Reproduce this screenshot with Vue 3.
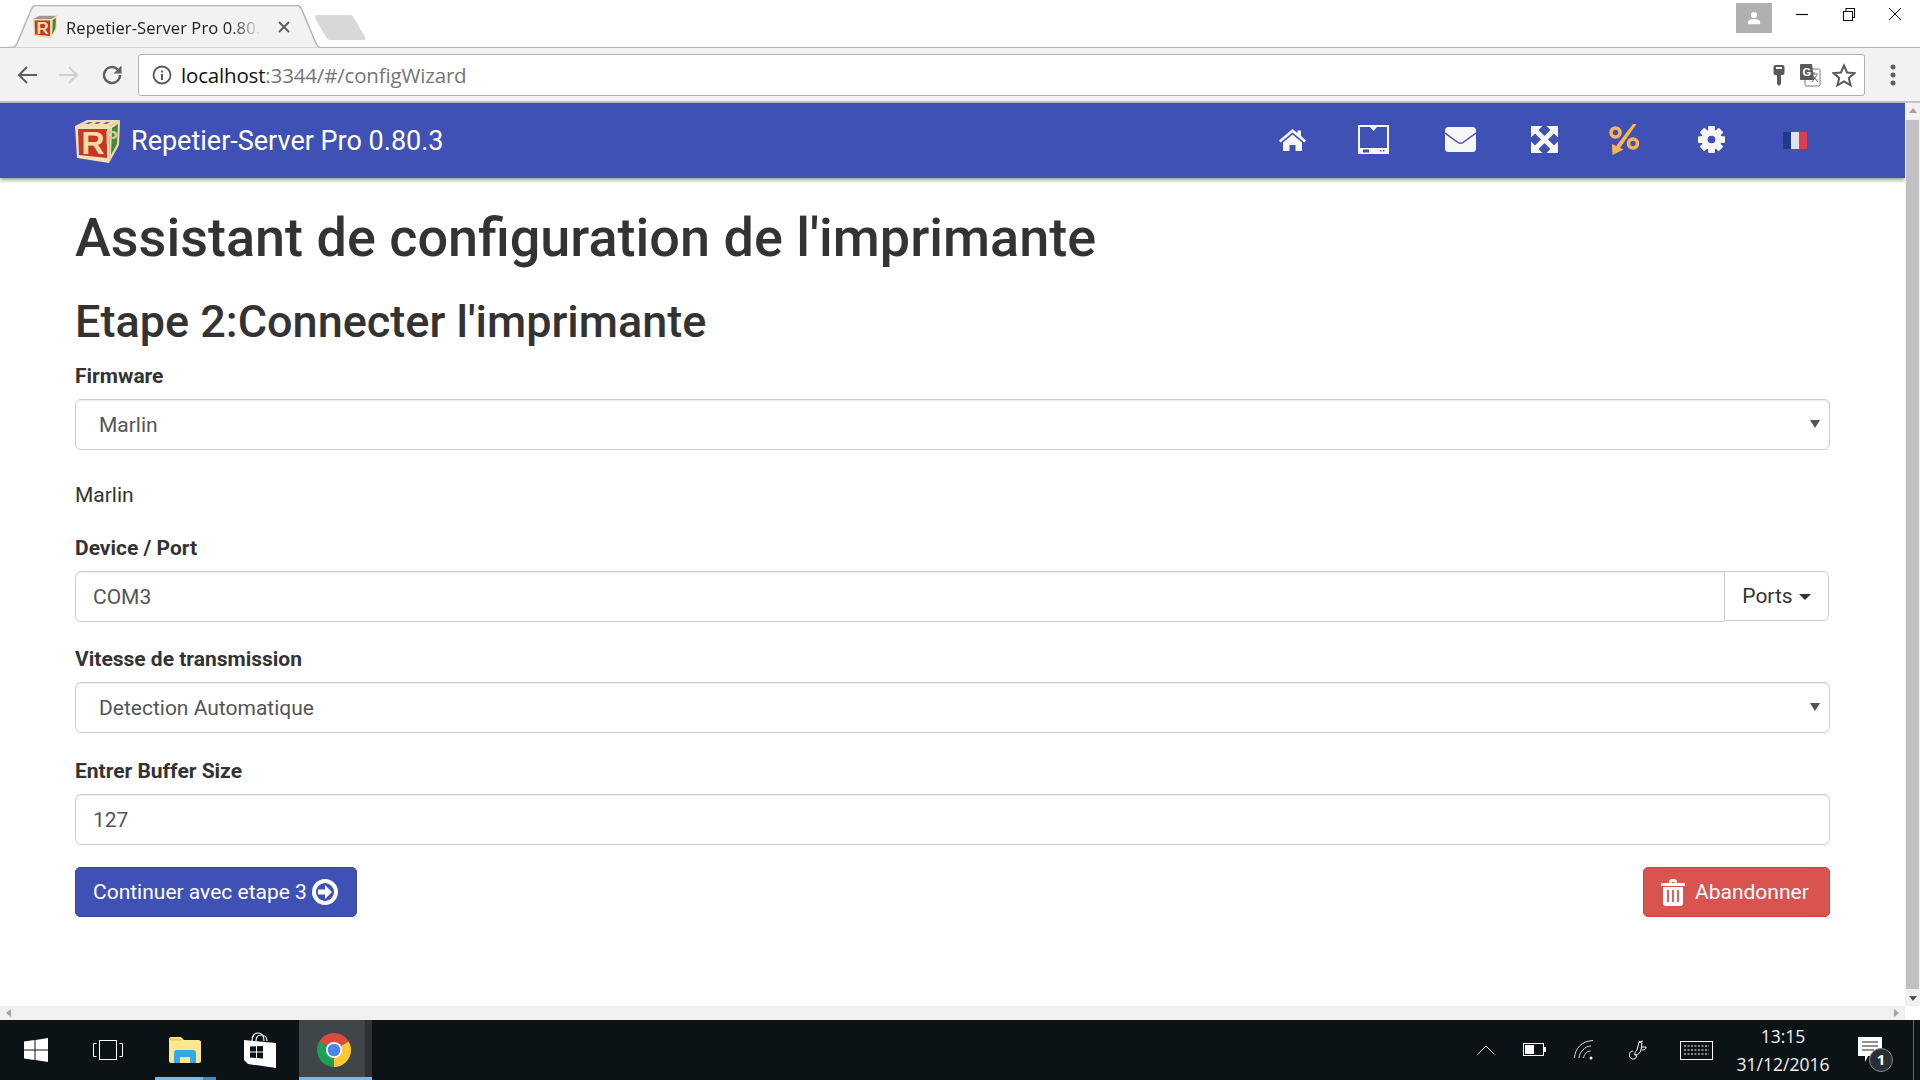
<script setup>
const teeth = [0, 45, 90, 135]
</script>

<template>
  <div class="window">
    <div class="tabstrip">
      <div class="tab">
        <svg class="tab-shape" viewBox="0 0 312 43" width="312" height="43"><path d="M0 42.500h4c3 0 4-2 5-4L23 5c1-3 3-4.500 6-4.500h259c3 0 5 1.500 6 4.500l14 33.500c1 2 2 4 5 4" fill="#f2f2f2" stroke="#b4b4b4" stroke-width="1.500"/></svg>
        <svg class="favicon" viewBox="0 0 45 44" width="24" height="24">
          <path d="M0 7L12 1h33L35 7z" fill="#9b9a92"/>
          <path d="M35 7L45 1l-1 25-10 18z" fill="#f0dcae"/>
          <path d="M37 9l6-4-1 20-6 11z" fill="#3f8a3c"/>
          <path d="M0 7h35l-1 37L2 39z" fill="#f0dcae"/>
          <path d="M3 10h29l0 29-28-3z" fill="#c5352a"/>
          <text x="18" y="35" class="cube-r">R</text>
        </svg>
        <span class="tab-title">Repetier-Server Pro 0.80.</span>
        <svg class="tab-close" viewBox="0 0 12 12" width="12" height="12"><path d="M1 1l10 10M11 1L1 11" stroke="#5a5a5a" stroke-width="1.800"/></svg>
      </div>
      <svg class="newtab" viewBox="0 0 52 26" width="52" height="26"><path d="M3 1h33c2 0 3 1 4 3l11 19c1 2 0 3-2 3H16c-2 0-3-1-4-3L1 4c-1-2 0-3 2-3z" fill="#d8d8d8"/></svg>
      <div class="spacer"></div>
      <div class="user"><svg viewBox="0 0 16 16" width="14" height="14"><circle cx="8" cy="4.500" r="3.500" fill="#fff"/><path d="M1 15v-2c0-3 4-4 7-4s7 1 7 4v2z" fill="#fff"/></svg></div>
      <div class="winbtns">
        <svg viewBox="0 0 14 14" width="14" height="14"><path d="M1 7.500h12" stroke="#111" stroke-width="1.200"/></svg>
        <svg viewBox="0 0 14 14" width="14" height="14"><path d="M1.500 4.500h9v9h-9zM4 4.500v-3h8.500v9h-2" fill="none" stroke="#111" stroke-width="1.100"/></svg>
        <svg viewBox="0 0 14 14" width="14" height="14"><path d="M1 1l12 12M13 1L1 13" stroke="#111" stroke-width="1"/></svg>
      </div>
    </div>

    <div class="toolbar">
      <svg class="tb-icon" viewBox="0 0 20 20" width="20" height="20"><path d="M20 10H2M10 2l-8 8 8 8" fill="none" stroke="#5f5f5f" stroke-width="2"/></svg>
      <svg class="tb-icon" viewBox="0 0 20 20" width="20" height="20"><path d="M0 10h18M10 2l8 8-8 8" fill="none" stroke="#d0d0d0" stroke-width="2"/></svg>
      <svg class="tb-icon" viewBox="0 0 22 22" width="22" height="22"><path d="M19 11a8 8 0 1 1-2.400-5.700" fill="none" stroke="#5f5f5f" stroke-width="2.400"/><path d="M20.500 1.500v8h-8z" fill="#5f5f5f"/></svg>
      <div class="omnibox">
        <svg viewBox="0 0 20 20" width="20" height="20"><circle cx="10" cy="10" r="8.500" fill="none" stroke="#5a5a5a" stroke-width="1.800"/><rect x="9" y="9" width="2" height="6" fill="#5a5a5a"/><rect x="9" y="5.500" width="2" height="2" fill="#5a5a5a"/></svg>
        <span class="url"><b>localhost</b>:3344/#/configWizard</span>
        <div class="spacer"></div>
        <svg class="key" viewBox="0 0 12 24" width="12" height="24"><rect x="0.500" y="2" width="11" height="10" rx="2" fill="#5a5a5a"/><rect x="3" y="4" width="6" height="2" fill="#fff"/><path d="M4 12h4v9l-2 2-2-2z" fill="#5a5a5a"/></svg>
        <svg viewBox="0 0 22 24" width="22" height="24"><rect x="6" y="6" width="15" height="17" rx="1.500" fill="#fff" stroke="#777"/><path d="M2 1h11l2 16H2a1 1 0 0 1-1-1V2a1 1 0 0 1 1-1z" fill="#5a5a5a"/><text x="3.500" y="13" class="gt">G</text><path d="M12 11h7M15 9v2M18 12l-5 7M14 13l5 6" stroke="#666" fill="none"/></svg>
        <svg viewBox="0 0 24 24" width="24" height="24"><path d="M12 2.500l3 7 7.500.6-5.700 4.900 1.800 7.300L12 18.400l-6.600 3.900 1.800-7.300L1.500 10.100 9 9.500z" fill="none" stroke="#5a5a5a" stroke-width="2"/></svg>
      </div>
      <svg class="kebab" viewBox="0 0 6 24" width="6" height="24"><circle cx="3" cy="4" r="2.500" fill="#5f5f5f"/><circle cx="3" cy="12" r="2.500" fill="#5f5f5f"/><circle cx="3" cy="20" r="2.500" fill="#5f5f5f"/></svg>
    </div>

    <div class="viewport">
      <div class="page">
        <div class="main">
          <nav class="navbar">
            <svg class="logo" viewBox="0 0 45 44" width="45" height="44">
              <path d="M0 7L12 1h33L35 7z" fill="#f0dcae"/>
              <path d="M10 5l4-2h4l-4 2zM19 5l3-2h4l-3 2zM28 5l3-2h4l-3 2z" fill="#5c6bb0"/>
              <path d="M35 7L45 1l-1 25-10 18z" fill="#f0dcae"/>
              <path d="M37 9l6-4-1 20-6 11z" fill="#3f8a3c"/>
              <path d="M0 7h35l-1 37L2 39z" fill="#f3e0b2"/>
              <path d="M3 10h29l0 29-28-3z" fill="#c5352a"/>
              <text x="18" y="35" class="cube-r">R</text>
              <text x="36.500" y="25" class="cube-p">P</text>
            </svg>
            <span class="brand">Repetier-Server Pro 0.80.3</span>
            <div class="spacer"></div>
            <a class="nav-item n-home">
              <svg viewBox="0 0 27 22" width="27" height="22"><path d="M13.500 0L0 11.500l1.500 2L13.500 3.500l12 10 1.500-2L22 7V1.500h-3.500v2.500z" fill="#f7f7f7"/><path d="M13.500 5.500L4 13.500V22h6.500v-6h6v6H23v-8.500z" fill="#f7f7f7"/></svg>
            </a>
            <a class="nav-item n-printer">
              <svg viewBox="0 0 31 29" width="31" height="29"><path d="M0 0h31v29H0z" fill="#f7f7f7"/><path d="M2 2h10l3.500 4L19 2h10v21H2z" fill="#3f51b5"/><rect x="5" y="24.500" width="6" height="3" fill="#3f51b5"/><rect x="22" y="25" width="1.500" height="1.500" fill="#3f51b5"/><rect x="25" y="25" width="1.500" height="1.500" fill="#3f51b5"/></svg>
            </a>
            <a class="nav-item n-mail">
              <svg viewBox="0 0 31 25" width="31" height="25"><rect width="31" height="25" rx="3.500" fill="#f7f7f7"/><path d="M0 6l13 9.500c1.500 1 3.500 1 5 0L31 6" fill="none" stroke="#3f51b5" stroke-width="1.500"/></svg>
            </a>
            <a class="nav-item n-expand">
              <svg viewBox="0 0 27 27" width="27" height="27"><path d="M0 0h11.500L0 11.500zM27 0v11.500L15.500 0zM0 27V15.500L11.500 27zM27 27H15.500L27 15.500z" fill="#f7f7f7"/><path d="M4 4l19 19M23 4L4 23" stroke="#f7f7f7" stroke-width="5"/></svg>
            </a>
            <a class="nav-item n-pct">
              <svg viewBox="0 0 31 31" width="31" height="31"><circle cx="6.500" cy="8.500" r="4.500" fill="none" stroke="#fbb64f" stroke-width="3.500"/><circle cx="24" cy="19.500" r="4.500" fill="none" stroke="#fbb64f" stroke-width="3.500"/><path d="M24 0h3.500L10 25.500l-3.500-2.500z" fill="#fbb64f"/><path d="M3.500 31l-.5-11 11.500 5.500z" fill="#fbb64f"/></svg>
            </a>
            <a class="nav-item n-gear">
              <svg viewBox="0 0 28 28" width="27" height="27">
                <rect v-for="a in teeth" :key="a" x="10.500" y="0" width="7" height="28" rx="1" fill="#f7f7f7" :transform="`rotate(${a} 14 14)`"/>
                <circle cx="14" cy="14" r="10.500" fill="#f7f7f7"/>
                <circle cx="14" cy="14" r="4" fill="#3f51b5"/>
              </svg>
            </a>
            <a class="nav-item flag">
              <i class="fl-b"></i><i class="fl-w"></i><i class="fl-r"></i>
            </a>
          </nav>

          <div class="content">
            <h1>Assistant de configuration de l'imprimante</h1>
            <h2>Etape 2:Connecter l'imprimante</h2>

            <label>Firmware</label>
            <div class="sel"><select><option>Marlin</option></select></div>
            <p class="firm">Marlin</p>

            <label>Device / Port</label>
            <div class="input-group">
              <input value="COM3" />
              <button class="ports">Ports <i class="caret"></i></button>
            </div>

            <label>Vitesse de transmission</label>
            <div class="sel"><select><option>Detection Automatique</option></select></div>

            <label>Entrer Buffer Size</label>
            <input class="solo" value="127" />

            <div class="actions">
              <button class="btn primary">Continuer avec etape 3
                <svg viewBox="0 0 26 26" width="26" height="26"><circle cx="13" cy="13" r="13" fill="#fff"/><circle cx="13" cy="13" r="9" fill="#3f51b5"/><path d="M13 6l7 7-7 7v-4.500H6v-5h7z" fill="#fff"/></svg>
              </button>
              <button class="btn danger">
                <svg viewBox="0 0 24 27" width="24" height="27"><path d="M8 4V3c0-1.500 1-3 3-3h2c2 0 3 1.500 3 3v1h7c.6 0 1 .4 1 1v2H0V5c0-.6.4-1 1-1zm2.500 0h3v-1h-3z" fill="#fff" fill-rule="evenodd"/><path d="M2 8h20v16c0 1.700-1 3-3 3H5c-2 0-3-1.300-3-3z" fill="#fff"/><path d="M7 11v12M12 11v12M17 11v12" stroke="#d9534f" stroke-width="1.800"/></svg>
                Abandonner
              </button>
            </div>
          </div>
        </div>
        <div class="vscroll">
          <i class="tri-up"></i>
          <div class="thumb"></div>
          <i class="tri-down"></i>
        </div>
      </div>
      <div class="hscroll"><i class="tri-left"></i><i class="tri-right"></i></div>
    </div>

    <footer class="taskbar">
      <svg class="t-win" viewBox="0 0 24 24" width="24" height="24"><path d="M0 3.500l10.500-1.500v9.500H0zM11.500 1.900L24 0v11.500H11.500zM0 12.500h10.500V22L0 20.500zM11.500 12.500H24V24l-12.500-1.900z" fill="#fff"/></svg>
      <svg class="t-view" viewBox="0 0 30 20" width="30" height="20"><path d="M3.500 3.500H.5v13h3M26.500 3.500h3v13h-3" fill="none" stroke="#fff"/><rect x="6.500" y=".5" width="17" height="19" fill="none" stroke="#fff"/></svg>
      <div class="t-app t-explorer">
        <svg viewBox="0 0 32 26" width="32" height="26"><path d="M0 2c0-1 1-2 2-2h10l3 3h15c1 0 2 1 2 2v19c0 1-1 2-2 2H2c-1 0-2-1-2-2z" fill="#fde78f"/><path d="M1 1.500h10l2 2H1z" fill="#f4c94c"/><path d="M5 26V16c0-2 1-3 3-3h16c2 0 3 1 3 3v10h-6v-6H11v6z" fill="#35a9e6"/></svg>
      </div>
      <svg class="t-store" viewBox="0 0 32 36" width="32" height="36"><path d="M8 9C8 3 11 1 14 1s6 2 6 8M12 9c0-4 2-6 5-6s6 2 6 6" fill="none" stroke="#fff" stroke-width="1.200"/><path d="M0 8l32 3v25L4 32 0 28z" fill="#fff"/><path d="M6 14.500l6-.3v5.300H6zM13 14.200l6-.3v5.600h-6zM6 20.500h6v5.500l-6-.5zM13 20.500h6v6l-6-.5z" fill="#0c1317"/></svg>
      <div class="t-app t-chrome">
        <svg viewBox="0 0 34 34" width="34" height="34">
          <path d="M17 17L2.300 8.500A17 17 0 0 1 31.700 8.500z" fill="#db4c3f"/>
          <path d="M17 17L31.700 8.500A17 17 0 0 1 17 34z" fill="#fcc934"/>
          <path d="M17 17L17 34A17 17 0 0 1 2.300 8.500z" fill="#1e9e56"/>
          <circle cx="17" cy="17" r="8" fill="#fff"/>
          <circle cx="17" cy="17" r="6.300" fill="#4a86e8"/>
        </svg>
      </div>
      <div class="spacer"></div>
      <svg class="s1" viewBox="0 0 18 10" width="18" height="10"><path d="M.5 9.500L9 1l8.500 8.500" fill="none" stroke="#fff"/></svg>
      <svg class="s2" viewBox="0 0 23 14" width="23" height="14"><rect x=".5" y=".5" width="20" height="12" fill="none" stroke="#fff"/><rect x="2" y="2" width="9" height="9" fill="#fff"/><rect x="21" y="4" width="2" height="5" fill="#fff"/></svg>
      <svg class="s3" viewBox="0 0 20 20" width="20" height="20"><path d="M.5 18C1 8 8 1 19 .5M5 18c.5-6 6-12 12-12M9.500 18c.5-3 3-7 7-7" fill="none" stroke="#d8d8d8"/><circle cx="17" cy="18" r="1.500" fill="#fff"/></svg>
      <svg class="s4" viewBox="0 0 20 20" width="20" height="20"><path d="M12 2l3 1-1 7c-1 3-4 6-6 5-1-1 0-3 2-5zM12 2l4-1M14 7l5 0c0 2-1 3-4 3M6 11a4 4 0 1 0 1 8c2 0 3-3 2-5" fill="none" stroke="#fff"/></svg>
      <svg class="s5" viewBox="0 0 33 19" width="33" height="19"><rect x=".5" y=".5" width="32" height="18" fill="none" stroke="#fff"/><path d="M4 5h25M4 9h25M4 13h25" stroke="#fff" stroke-dasharray="2 1.500"/></svg>
      <div class="clock"><span>13:15</span><span>31/12/2016</span></div>
      <div class="notif">
        <svg viewBox="0 0 24 26" width="24" height="26"><path d="M0 0h24v19H10l-3 6v-6H0z" fill="#fff"/><path d="M4 5h16M4 9h16M4 13h12" stroke="#222" stroke-width="1"/></svg>
        <span class="badge">1</span>
      </div>
      <div class="edge"></div>
    </footer>
  </div>
</template>

<style>
html, body { margin: 0; height: 100%; overflow: hidden; background: #fff; }
</style>

<style scoped>
.window { width: 1920px; height: 1080px; display: flex; flex-direction: column; font-family: Roboto, "Liberation Sans", sans-serif; color: #333; overflow: hidden; background: #fff; }
.spacer { flex: 1; }

/* browser tab strip */
.tabstrip { height: 48px; flex: none; display: flex; align-items: flex-start; background: #fff; position: relative; box-sizing: border-box; border-bottom: 1.500px solid #b4b4b4; }
.tab { width: 312px; height: 48px; margin-left: 8px; flex: none; position: relative; display: flex; align-items: center; z-index: 1; padding-top: 6px; box-sizing: border-box; }
.tab-shape { position: absolute; left: 0; top: 5px; }
.favicon { position: relative; margin-left: 25px; flex: none; }
.cube-r { font: 700 32px "Liberation Sans", sans-serif; fill: #f5dca0; text-anchor: middle; }
.cube-p { font: 700 19px "Liberation Sans", sans-serif; fill: #d8c890; text-anchor: middle; }
.tab-title { position: relative; margin-left: 9px; width: 195px; font: 16.500px "Open Sans", sans-serif; letter-spacing: .1px; color: #222; white-space: nowrap; overflow: hidden; -webkit-mask-image: linear-gradient(90deg, #000 85%, transparent 100%); mask-image: linear-gradient(90deg, #000 85%, transparent 100%); }
.tab-close { position: relative; margin-left: 17px; flex: none; }
.newtab { margin: 14px 0 0 -6px; flex: none; }
.user { width: 36px; height: 30px; background: #b0b0b0; margin-top: 3px; display: flex; align-items: center; justify-content: center; }
.winbtns { width: 148px; display: flex; justify-content: space-between; box-sizing: border-box; padding: 7px 18px 0 23px; }

/* browser toolbar */
.toolbar { height: 55px; flex: none; display: flex; align-items: center; background: #f2f2f2; box-sizing: border-box; border-bottom: 2px solid #c4c4c4; padding: 0 0 0 17px; }
.tb-icon { margin-right: 22px; flex: none; }
.toolbar .tb-icon:nth-child(3) { margin-right: 15px; }
.omnibox { width: 1727px; height: 42px; background: #fff; border: 1px solid #b0b0b0; border-radius: 3px; box-sizing: border-box; display: flex; align-items: center; padding: 0 8px 0 13px; gap: 11px; flex: none; }
.url { font: 20.500px "Open Sans", sans-serif; letter-spacing: -.17px; color: #757575; margin-left: -2px; white-space: nowrap; }
.url b { font-weight: 400; color: #111; }
.key { margin-right: 3px; }
.gt { font: 700 11px "Liberation Sans", sans-serif; fill: #fff; }
.kebab { margin-left: 25px; flex: none; }

/* page */
.viewport { flex: 1; min-height: 0; display: flex; flex-direction: column; }
.page { flex: 1; min-height: 0; display: flex; }
.main { flex: 1; min-width: 0; }
.navbar { height: 75px; background: #3f51b5; display: flex; align-items: center; padding: 0 98px 0 75px; box-shadow: 0 2px 4px rgba(0,0,0,.4); position: relative; }
.logo { flex: none; }
.brand { font-size: 27px; color: #fff; margin-left: 11px; white-space: nowrap; }
.nav-item { display: flex; align-items: center; justify-content: center; margin-top: -2px; flex: none; }
.n-printer { margin-left: 52px; }
.n-mail { margin-left: 56px; }
.n-expand { margin-left: 55px; }
.n-pct { margin-left: 51px; }
.n-gear { margin-left: 58px; }
.flag { margin: 0 0 0 58px; height: 17px; width: 24px; filter: blur(.4px); }
.flag i { flex: 1; height: 100%; }
.fl-b { background: #1f3b8c; }
.fl-w { background: #dfe0e8; }
.fl-r { background: #d9404f; }

.content { padding: 30px 75px 0 75px; }
h1 { margin: 0 0 30px; font-size: 54px; line-height: 60px; font-weight: 500; }
h2 { margin: 0 0 16px; font-size: 45px; line-height: 48px; font-weight: 500; }
label { display: block; font-size: 21px; line-height: 28px; font-weight: 700; margin-bottom: 9px; }
.firm { margin: 31px 0 25px; font-size: 21px; line-height: 28px; }
.sel { position: relative; margin-bottom: 24px; }
.sel::after { content: ""; position: absolute; right: 10px; top: 21px; border: 5px solid transparent; border-top: 8px solid #555; border-bottom: 0; }
select { appearance: none; -webkit-appearance: none; width: 100%; height: 51px; background: #fff; border: 1px solid #ccc; border-radius: 6px; font: 21px Roboto, sans-serif; color: #555; padding: 0 23px; box-shadow: inset 0 1px 1px rgba(0,0,0,.075); display: block; box-sizing: border-box; }
input { height: 51px; box-sizing: border-box; border: 1px solid #ccc; font: 21px Roboto, sans-serif; color: #555; padding: 0 17px; box-shadow: inset 0 1px 1px rgba(0,0,0,.075); background: #fff; outline: none; }
.solo { width: 100%; display: block; border-radius: 6px; }
.input-group { display: flex; margin-bottom: 23px; }
.input-group input { flex: 1; min-width: 0; border-radius: 6px 0 0 6px; }
.ports { width: 105px; height: 50px; box-sizing: border-box; margin: 0 1px 0 -1px; background: #fff; border: 1px solid #ccc; border-radius: 0 6px 6px 0; font: 21px Roboto, sans-serif; color: #333; padding: 0; display: flex; align-items: center; justify-content: center; gap: 6px; }
.caret { display: block; border: 6px solid transparent; border-top: 6px solid #333; border-bottom: 0; margin-top: 2px; }
.actions { display: flex; justify-content: space-between; margin-top: 22px; }
.btn { height: 50px; box-sizing: border-box; border-radius: 5px; color: #fff; font: 400 21px Roboto, sans-serif; display: flex; align-items: center; gap: 5px; padding: 0 17px; border: 1px solid; white-space: nowrap; }
.primary { background: #3f51b5; border-color: #3949a3; width: 282px; }
.danger { background: #d9534f; border-color: #d43f3a; width: 187px; gap: 10px; }

.vscroll { width: 15px; flex: none; background: #f1f1f1; position: relative; display: flex; flex-direction: column; align-items: center; }
.thumb { width: 100%; flex: 1; background: #c1c1c1; margin: 17px 0; box-sizing: border-box; border-left: 1px solid #f1f1f1; border-right: 1px solid #f1f1f1; }
.tri-up { position: absolute; top: 5px; border: 4px solid transparent; border-bottom: 5px solid #a3a3a3; border-top: 0; }
.tri-down { position: absolute; bottom: 5px; border: 4px solid transparent; border-top: 5px solid #505050; border-bottom: 0; }
.hscroll { height: 14px; flex: none; background: #f0f0f0; margin-right: 15px; display: flex; justify-content: space-between; align-items: center; padding: 0 6px; }
.tri-left { border: 4px solid transparent; border-right: 5px solid #a3a3a3; border-left: 0; }
.tri-right { border: 4px solid transparent; border-left: 5px solid #a3a3a3; border-right: 0; }

/* windows taskbar */
.taskbar { height: 60px; flex: none; background: #0c1317; display: flex; align-items: center; position: relative; color: #fff; }
.t-win { margin-left: 24px; flex: none; }
.t-view { margin-left: 45px; flex: none; }
.t-app { height: 60px; display: flex; align-items: center; justify-content: center; flex: none; box-sizing: border-box; }
.t-explorer { width: 61px; margin-left: 32px; padding-right: 2px; background: linear-gradient(90deg, #76b9ed 79%, #4f87b5 79%) bottom / 100% 3px no-repeat; }
.t-store { margin-left: 28px; flex: none; }
.t-chrome { width: 73px; margin-left: 23px; padding-right: 3px; background: linear-gradient(90deg, #76b9ed, #76b9ed) bottom / 100% 3px no-repeat, linear-gradient(90deg, #3f4649 90%, #2c3235 90%); }
.s1 { margin-right: 28px; flex: none; }
.s2 { margin-right: 28px; flex: none; }
.s3 { margin-right: 33px; flex: none; }
.s4 { margin-right: 33px; flex: none; }
.s5 { flex: none; }
.clock { width: 102px; margin-left: 19px; display: flex; flex-direction: column; align-items: center; font: 17.500px "Open Sans", sans-serif; line-height: 28px; color: #f4f4f4; }
.notif { position: relative; width: 24px; height: 26px; margin: 0 38px 0 24px; }
.badge { position: absolute; left: 11px; top: 11px; width: 24px; height: 24px; border-radius: 50%; background: #2a2f32; border: 1.500px solid #8a8a8a; box-sizing: border-box; font: 700 15px/21px "Open Sans", sans-serif; text-align: center; color: #fff; }
.edge { position: absolute; right: 6px; top: 0; bottom: 0; width: 1.500px; background: #666; }
</style>
